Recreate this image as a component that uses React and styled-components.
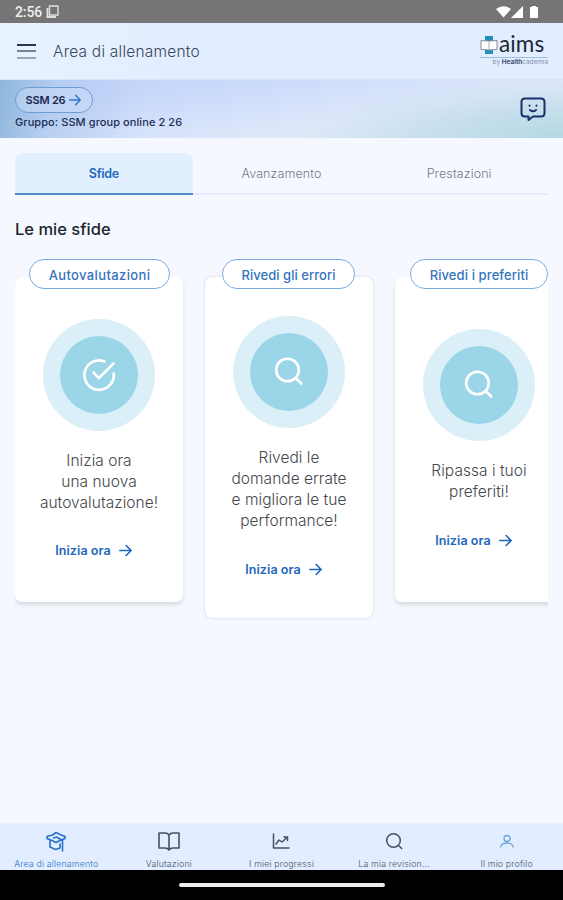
import React from "react";
import styled, { createGlobalStyle } from "styled-components";

const GlobalStyle = createGlobalStyle`
  * {
    box-sizing: border-box;
  }

  body {
    margin: 0;
    background: #f5f9ff;
    font-family: Inter, "Open Sans", sans-serif;
  }
`;

const Screen = styled.div`
  width: 563px;
  height: 900px;
  display: flex;
  flex-direction: column;
  overflow: hidden;
  background: #f5f9ff;
`;

const StatusBar = styled.div`
  height: 23px;
  flex-shrink: 0;
  display: flex;
  align-items: center;
  padding: 0 24px 0 15px;
  background: #757575;
  color: #f0f0f0;
`;

const Clock = styled.span`
  font: 500 14px Roboto, sans-serif;
  margin-right: 4px;
  letter-spacing: -0.1px;
`;

const StatusIcons = styled.svg`
  margin-left: auto;
`;

const Header = styled.header`
  height: 57px;
  flex-shrink: 0;
  display: flex;
  align-items: center;
  padding: 0 15px 0 17px;
  background: linear-gradient(to right, #e8f2ff, #e2eeff 30%, #e2eeff);
  border-bottom: 1px solid #d9e6f8;
`;

const Burger = styled.button`
  width: 19px;
  height: 15px;
  padding: 0;
  margin-right: 17px;
  border: none;
  background: none;
  display: flex;
  flex-direction: column;
  justify-content: space-between;
`;

const BurgerLine = styled.span`
  width: 19px;
  height: 2px;
  background: ${(props) => props.$color};
`;

const PageTitle = styled.h1`
  margin: 0;
  font-size: 15.5px;
  font-weight: 300;
  letter-spacing: 0.22px;
  color: #3a465c;
`;

const Logo = styled.div`
  width: 68px;
  height: 33px;
  margin: 0 0 0 auto;
  display: flex;
  flex-direction: column;
`;

const LogoTop = styled.div`
  height: 23px;
  flex-shrink: 0;
  display: flex;
  align-items: center;
  padding-bottom: 2px;
  border-bottom: 1px solid #9dbfdb;
`;

const LogoName = styled.span`
  height: 20px;
  margin-left: 1px;
  font: 400 22.5px/18px Lato, sans-serif;
  letter-spacing: 0.1px;
  color: #202735;
`;

const LogoBy = styled.span`
  height: 9px;
  font-size: 6.4px;
  line-height: 9px;
  text-align: right;
  white-space: nowrap;
  color: #8290a6;
`;

const LogoBold = styled.b`
  color: #43536e;
`;

const Banner = styled.section`
  height: 58px;
  flex-shrink: 0;
  display: flex;
  align-items: center;
  justify-content: space-between;
  padding: 0 17px 0 15px;
  background:
    linear-gradient(100deg, #8fb7dc, #a9c6ec99 10%, #bdd2f700 26%),
    radial-gradient(ellipse 260px 60px at 100% 100%, #b4d8e4, #b4d8e400),
    linear-gradient(170deg, #c6d7fa 22%, #d3e0fb 45%, #dfe8f9 65%, #d6e5f2 100%);
`;

const GroupInfo = styled.div`
  display: flex;
  flex-direction: column;
  align-items: flex-start;
  margin-top: -2px;
`;

const CourseButton = styled.button`
  height: 26px;
  width: 78px;
  padding: 0;
  display: flex;
  align-items: center;
  justify-content: center;
  gap: 3px;
  border: 1px solid #6c9dd8;
  border-radius: 13px;
  background: #d3e2f966;
  font: 600 11px Inter, sans-serif;
  letter-spacing: -0.2px;
  color: #17274f;
`;

const GroupName = styled.p`
  margin: 1px 0 0;
  font-size: 11px;
  line-height: 16px;
  font-weight: 500;
  letter-spacing: 0.08px;
  color: #1f2e55;
`;

const Main = styled.main`
  flex: 1;
  padding: 15px 15px 0;
`;

const Tabs = styled.nav`
  display: grid;
  grid-template-columns: repeat(3, 1fr);
  height: 42px;
  border-bottom: 2px solid #e6ecfb;
`;

const Tab = styled.button`
  height: 42px;
  padding: 0;
  border: none;
  border-bottom: 2px solid ${(props) => (props.$active ? "#5489c9" : "transparent")};
  border-radius: ${(props) => (props.$active ? "8px 8px 0 0" : "0")};
  background: ${(props) => (props.$active ? "#e2efff" : "none")};
  color: ${(props) => (props.$active ? "#1e68bd" : "#747a84")};
  font: ${(props) => (props.$active ? 600 : 300)} 12.5px Inter, sans-serif;
  letter-spacing: ${(props) => (props.$active ? "-0.3px" : "0.1px")};
`;

const SectionTitle = styled.h2`
  margin: 23px 0 0;
  font-size: 16.5px;
  line-height: 22px;
  font-weight: 500;
  color: #20242c;
`;

const CardRow = styled.div`
  display: flex;
  align-items: flex-start;
  gap: 22px;
  padding: 37px 0 10px;
  overflow: hidden;
`;

const Card = styled.article`
  position: relative;
  width: 168px;
  min-height: 325px;
  padding: 39px 0;
  flex-shrink: 0;
  display: flex;
  flex-direction: column;
  align-items: center;
  justify-content: center;
  border-radius: 7px;
  background: #fff;
  box-shadow: ${(props) => (props.$flat ? "0 0 3px #c9d0e0" : "0 3px 4px #d5dae3")};
`;

const CardLabel = styled.span`
  position: absolute;
  top: -18px;
  left: ${(props) => props.$left}px;
  width: ${(props) => props.$width}px;
  height: 30px;
  display: flex;
  align-items: center;
  justify-content: center;
  padding-top: 2px;
  border: 1px solid #7eabdf;
  border-radius: 15px;
  background: #fff;
  font-size: 13px;
  font-weight: 500;
  letter-spacing: ${(props) => props.$spacing}px;
  white-space: nowrap;
  color: #3574bd;
`;

const Ring = styled.div`
  width: 112px;
  height: 112px;
  display: flex;
  align-items: center;
  justify-content: center;
  border-radius: 50%;
  background: #daeff7;
`;

const Disc = styled.div`
  width: 78px;
  height: 78px;
  display: flex;
  align-items: center;
  justify-content: center;
  border-radius: 50%;
  background: #9ad5e8;
`;

const CardText = styled.p`
  margin: 19px 0 28px;
  font-size: 15.5px;
  line-height: 21px;
  font-weight: 300;
  letter-spacing: 0.03px;
  text-align: center;
  white-space: pre-line;
  color: #44474c;
`;

const StartButton = styled.button`
  height: 20px;
  padding: 0;
  margin-right: 10px;
  display: flex;
  align-items: center;
  gap: 7px;
  border: none;
  background: none;
  font: 600 12.5px Inter, sans-serif;
  letter-spacing: 0.08px;
  color: #1b67bd;
`;

const BottomNav = styled.nav`
  height: 46px;
  flex-shrink: 0;
  display: grid;
  grid-template-columns: repeat(5, 1fr);
  background: #e2eeff;
  box-shadow: 0 0 2px #d3deec;
`;

const NavItem = styled.a`
  display: flex;
  flex-direction: column;
  align-items: center;
  padding-top: 5px;
  color: ${(props) => (props.$active ? "#2871c4" : "#465264")};
`;

const NavLabel = styled.span`
  margin-top: 5px;
  font-size: 8.8px;
  line-height: 12px;
  font-weight: 300;
  letter-spacing: 0.16px;
  white-space: nowrap;
`;

const GestureArea = styled.div`
  height: 30px;
  flex-shrink: 0;
  display: flex;
  align-items: center;
  justify-content: center;
  background: #000;
`;

const GestureBar = styled.div`
  width: 206px;
  height: 4px;
  border-radius: 2px;
  background: #ececec;
`;

const Icon = ({ size, stroke = 1.5, children }) => (
  <svg
    width={size}
    height={size}
    viewBox="0 0 24 24"
    fill="none"
    stroke="currentColor"
    strokeWidth={stroke}
    strokeLinecap="round"
    strokeLinejoin="round"
  >
    {children}
  </svg>
);

const ArrowIcon = ({ size, color }) => (
  <Icon size={size} stroke={2.6}>
    <path d="M3 12h18M13 4l8 8-8 8" stroke={color} />
  </Icon>
);

const CheckIcon = () => (
  <svg width="34" height="34" viewBox="0 0 34 34" fill="none" stroke="#fff" strokeWidth="2.6" strokeLinecap="round" strokeLinejoin="round">
    <path d="M22.500 3.500A14.700 14.700 0 1 0 31.700 15.500" />
    <path d="M11.500 14.500l5.500 5.500L31.500 5.500" />
  </svg>
);

const SearchIcon = () => (
  <svg width="34" height="34" viewBox="0 0 34 34" fill="none" stroke="#fff" strokeWidth="2.6" strokeLinecap="round">
    <circle cx="15.500" cy="15" r="11.300" />
    <path d="M23.800 23.200l5.500 5.300" />
  </svg>
);

const cards = [
  {
    label: "Autovalutazioni",
    left: 14,
    width: 141,
    spacing: 0.37,
    text: "Inizia ora\nuna nuova\nautovalutazione!",
    icon: <CheckIcon />,
  },
  {
    label: "Rivedi gli errori",
    left: 17,
    width: 133,
    spacing: 0.05,
    text: "Rivedi le\ndomande errate\ne migliora le tue\nperformance!",
    icon: <SearchIcon />,
    flat: true,
  },
  {
    label: "Rivedi i preferiti",
    left: 15,
    width: 138,
    spacing: 0.1,
    text: "Ripassa i tuoi\npreferiti!",
    icon: <SearchIcon />,
  },
];

const navItems = [
  {
    label: "Area di allenamento",
    active: true,
    icon: (
      <Icon size={24} stroke={1.6}>
        <path d="M3 7.500L8.500 6 12 3.500 16 5.500l5 2v2L17 11l-5 2.500-4-2-5-2z" />
        <path d="M6 11.500V18l5.500 2.500L16 19v-4M9.500 9l3-1 6 3.500V22" />
      </Icon>
    ),
  },
  {
    label: "Valutazioni",
    icon: (
      <Icon size={24} stroke={1.6}>
        <path d="M12 6c-1-1.500-2-2-4-2H2v15h6c2 0 3 .5 4 2 1-1.500 2-2 4-2h6V4h-6c-2 0-3 .5-4 2zM12 6v15" />
      </Icon>
    ),
  },
  {
    label: "I miei progressi",
    icon: (
      <Icon size={24} stroke={1.5}>
        <path d="M4.500 5v14H20M7 15l3-4 3 2 5-4.500M15 8h3.500v3.500" />
      </Icon>
    ),
  },
  {
    label: "La mia revision...",
    icon: (
      <Icon size={24} stroke={1.5}>
        <circle cx="11.500" cy="11.500" r="6.800" />
        <path d="M16.500 16.500l3.200 3" />
      </Icon>
    ),
  },
  {
    label: "Il mio profilo",
    icon: (
      <Icon size={24} stroke={1.3}>
        <g stroke="#6ea3dc">
          <circle cx="12" cy="9.500" r="3" />
          <path d="M5.800 18c.5-3 3-4 6.200-4s5.700 1 6.200 4" />
        </g>
      </Icon>
    ),
  },
];

const App = () => {
  return (
    <Screen>
      <GlobalStyle />
      <StatusBar>
        <Clock>2:56</Clock>
        <svg width="13" height="13" viewBox="0 0 13 13" fill="none" stroke="#dedede">
          <path d="M3.500 1h8.500v9H3.500z" strokeWidth="1.4" />
          <path d="M1.500 3v9H10" strokeWidth="2" />
        </svg>
        <StatusIcons width="43" height="14" viewBox="0 0 43 14" fill="#fff">
          <path d="M0 4Q7.500-1.500 15 4L7.500 12.500z" />
          <path d="M27 1v12H15z" />
          <path d="M34 2h2V1h4v1h2v11h-8z" />
        </StatusIcons>
      </StatusBar>

      <Header>
        <Burger aria-label="Menu">
          <BurgerLine $color="#2b3350" />
          <BurgerLine $color="#778297" />
          <BurgerLine $color="#9ba5b5" />
        </Burger>
        <PageTitle>Area di allenamento</PageTitle>
        <Logo>
          <LogoTop>
            <svg width="18" height="20" viewBox="0 0 18 20">
              <path d="M5 1h8v18H5z" fill="#2290b8" />
              <path d="M1 5.500l8 .5 8-.5v9l-8 .5-8-.5z" fill="#fff" stroke="#818d99" />
              <path d="M9 6v9" stroke="#a5b0ba" />
            </svg>
            <LogoName>aims</LogoName>
          </LogoTop>
          <LogoBy>
            by <LogoBold>Health</LogoBold>cademia
          </LogoBy>
        </Logo>
      </Header>

      <Banner>
        <GroupInfo>
          <CourseButton>
            SSM 26
            <ArrowIcon size={14} color="#3179c8" />
          </CourseButton>
          <GroupName>Gruppo: SSM group online 2 26</GroupName>
        </GroupInfo>
        <svg width="26" height="24" viewBox="0 0 26 24" fill="none" stroke="#18306a" strokeWidth="2" strokeLinejoin="round" strokeLinecap="round">
          <path d="M5 1.500h16q3.500 0 3.500 3.500v11q0 3.500-3.500 3.500h-8L8.500 23v-3.500H5q-3.500 0-3.500-3.500V5q0-3.500 3.500-3.500z" />
          <path d="M9.500 8.500v.2M16.500 8.500v.2M10 13q3 2.500 6 0" />
        </svg>
      </Banner>

      <Main>
        <Tabs>
          <Tab $active>Sfide</Tab>
          <Tab>Avanzamento</Tab>
          <Tab>Prestazioni</Tab>
        </Tabs>
        <SectionTitle>Le mie sfide</SectionTitle>
        <CardRow>
          {cards.map((card) => (
            <Card key={card.label} $flat={card.flat}>
              <CardLabel $left={card.left} $width={card.width} $spacing={card.spacing}>
                {card.label}
              </CardLabel>
              <Ring>
                <Disc>{card.icon}</Disc>
              </Ring>
              <CardText>{card.text}</CardText>
              <StartButton>
                Inizia ora
                <ArrowIcon size={15} />
              </StartButton>
            </Card>
          ))}
        </CardRow>
      </Main>

      <BottomNav>
        {navItems.map((item) => (
          <NavItem key={item.label} $active={item.active}>
            {item.icon}
            <NavLabel>{item.label}</NavLabel>
          </NavItem>
        ))}
      </BottomNav>
      <GestureArea>
        <GestureBar />
      </GestureArea>
    </Screen>
  );
};

export default App;
